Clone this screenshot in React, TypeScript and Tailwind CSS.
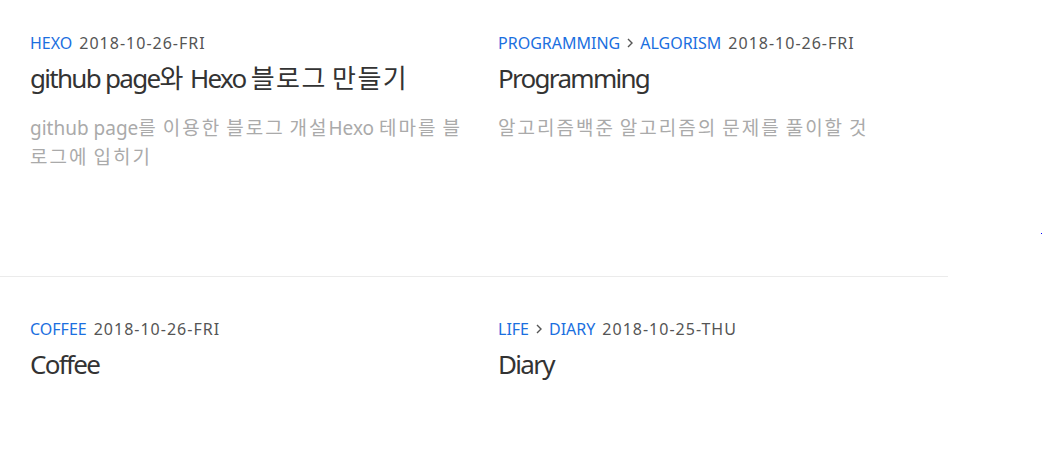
const posts = [
  {
    cats: ["HEXO"],
    date: "2018-10-26-FRI",
    title: "github page와 Hexo 블로그 만들기",
    excerpt: "github page를 이용한 블로그 개설Hexo 테마를 블로그에 입히기",
  },
  {
    cats: ["PROGRAMMING", "ALGORISM"],
    date: "2018-10-26-FRI",
    title: "Programming",
    excerpt: "알고리즘백준 알고리즘의 문제를 풀이할 것",
  },
  {
    cats: ["COFFEE"],
    date: "2018-10-26-FRI",
    title: "Coffee",
    excerpt: "",
  },
  {
    cats: ["LIFE", "DIARY"],
    date: "2018-10-25-THU",
    title: "Diary",
    excerpt: "",
  },
];

// (one span per syllable so no span runs across a line break)
function Mixed({ text, ko, en }: { text: string; ko: string; en: string }) {
  return (
    <>
      {text.split(/([가-힣])/).map((part, i) =>
        /[가-힣]/.test(part) ? (
          <span key={i} className={ko}>
            {part}
          </span>
        ) : part ? (
          <span key={i} className={en}>
            {part}
          </span>
        ) : null
      )}
    </>
  );
}

function Post({ p }: { p: (typeof posts)[number] }) {
  return (
    <div className="pl-[30px]">
      <div className="flex items-center text-[16px] leading-[20px]">
        {p.cats.map((c, i) => (
          <span key={c} className="flex items-center">
            {i > 0 && (
              <svg className="mx-[6px] h-[12px] w-[8px] text-[#555]" viewBox="0 0 8 12" fill="none">
                <path d="M2 2l4 4-4 4" stroke="currentColor" strokeWidth="1.4" />
              </svg>
            )}
            <span className="text-[#1b6fe0]">{c}</span>
          </span>
        ))}
        <span className="ml-[7px] tracking-[1px] text-[#555]">{p.date}</span>
      </div>
      <h2 className="mt-[8px] text-[26px] leading-[34px] text-[#333]">
        <Mixed text={p.title} ko="tracking-[1.5px]" en="tracking-[-1.7px]" />
      </h2>
      {p.excerpt && (
        <p className="mt-[19px] max-w-[436px] text-[19px] leading-[29px] text-[#aaa]">
          <Mixed text={p.excerpt} ko="tracking-[2px]" en="tracking-[0px]" />
        </p>
      )}
    </div>
  );
}

export default function App() {
  return (
    <div
      className="relative h-[455px] w-[1042px] overflow-hidden bg-white"
      style={{ fontFamily: '"Noto Sans", "Noto Sans CJK KR", sans-serif' }}
    >
      <div className="grid h-[277px] w-[948px] grid-cols-[468px_480px] border-b border-[#ebebeb] pt-[33px]">
        <Post p={posts[0]} />
        <Post p={posts[1]} />
      </div>
      <div className="grid w-[948px] grid-cols-[468px_480px] pt-[42px]">
        <Post p={posts[2]} />
        <Post p={posts[3]} />
      </div>
      <span className="absolute left-[1041px] top-[233px] h-px w-px bg-[#0000ff]" />
    </div>
  );
}
